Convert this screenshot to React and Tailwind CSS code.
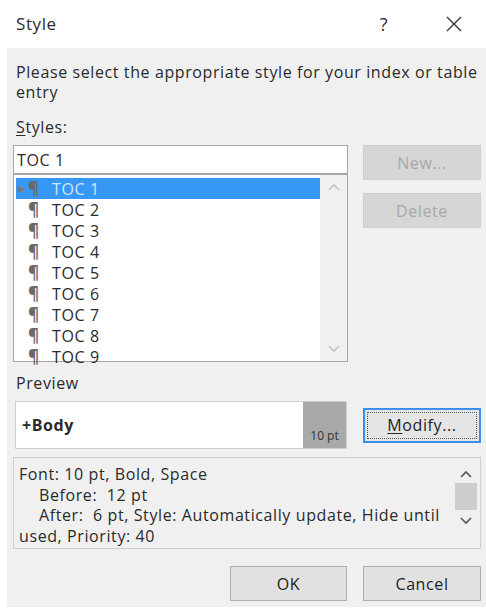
import React from 'react';

const styles = ['TOC 1', 'TOC 2', 'TOC 3', 'TOC 4', 'TOC 5', 'TOC 6', 'TOC 7', 'TOC 8', 'TOC 9'];

function Chevron({ up, className = '' }) {
  return (
    <svg width="12" height="8" viewBox="0 0 12 8" className={className}>
      <polyline
        points={up ? '1,7 6,2 11,7' : '1,1 6,6 11,1'}
        fill="none"
        stroke="currentColor"
        strokeWidth="1.6"
      />
    </svg>
  );
}

function DialogButton({ children, disabled, focused, className = '' }) {
  if (focused) {
    return (
      <div className={`h-[35px] border-2 border-[#3a8fe8] bg-[#e5e5e5] p-[2px] ${className}`}>
        <div className="h-full border border-dotted border-[#555] flex items-center justify-center text-[#222]">
          {children}
        </div>
      </div>
    );
  }
  return (
    <div
      className={`h-[35px] border flex items-center justify-center ${
        disabled ? 'border-[#cfcfcf] bg-[#d6d6d6] text-[#a8a8a8]' : 'border-[#adadad] bg-[#e1e1e1] text-[#222]'
      } ${className}`}
    >
      {children}
    </div>
  );
}

export default function App() {
  return (
    <div className="w-[486px] h-[609px] bg-white text-[16px] tracking-[0.6px] text-[#2a2a2a] font-['Open_Sans','Noto_Sans',sans-serif] overflow-hidden">
      {/* title bar */}
      <div className="h-[48px] flex items-center pl-[16px] pr-[24px]">
        <span className="flex-1 text-[17px]">Style</span>
        <span className="text-[18px] mr-[58px]">?</span>
        <svg width="16" height="16" viewBox="0 0 16 16">
          <path d="M1 1 L15 15 M15 1 L1 15" stroke="#333" strokeWidth="1.4" />
        </svg>
      </div>

      <div className="ml-[7px] h-[559px] bg-[#f0f0f0] pl-[6px] pr-[5px] pt-[14px] flex flex-col">
        <p className="pl-[3px] leading-[20px]">
          Please select the appropriate style for your index or table entry
        </p>

        <div className="pl-[3px] mt-[15px] leading-[20px]">
          <span className="underline underline-offset-2">S</span>tyles:
        </div>

        <div className="flex mt-[8px]">
          <div className="w-[335px] flex flex-col">
            <div className="h-[29px] border border-[#a6a6a6] bg-white flex items-center pl-[3px]">TOC 1</div>
            <div className="h-[188px] border border-[#a6a6a6] bg-white flex">
              <div className="flex-1 pl-[2px] pt-[3px]">
                {styles.map((s, i) => (
                  <div
                    key={s}
                    className={`h-[21px] flex items-center ${i === 0 ? 'bg-[#3797f4] text-[#cfe6ff]' : ''}`}
                  >
                    <span className="w-[12px] text-[10px] text-[#7a7a7a] pl-[2px]">{i === 0 ? '▶' : ''}</span>
                    <span className="w-[24px] font-bold text-[17px] text-[#6a6a6a]">¶</span>
                    <span>{s}</span>
                  </div>
                ))}
              </div>
              <div className="w-[27px] bg-[#f0f0f0] flex flex-col items-center justify-between py-[8px] text-[#c4c4c4]">
                <Chevron up />
                <Chevron />
              </div>
            </div>
          </div>

          <div className="flex-1 flex flex-col items-end">
            <DialogButton disabled className="w-[118px]">New...</DialogButton>
            <DialogButton disabled className="w-[118px] mt-[13px]">Delete</DialogButton>
          </div>
        </div>

        <div className="pl-[3px] mt-[11px] leading-[20px]">Preview</div>

        <div className="flex items-center mt-[8px]">
          <div className="ml-[2px] w-[332px] h-[48px] border border-[#cfcfcf] bg-white flex">
            <div className="flex-1 flex items-center pl-[6px] font-bold">+Body</div>
            <div className="w-[43px] bg-[#a9a9a9] flex items-end justify-center pb-[3px] text-[12px] tracking-normal text-[#333]">10 pt</div>
          </div>
          <div className="flex-1 flex justify-end">
            <DialogButton focused className="w-[118px]">
              <span>
                <span className="underline underline-offset-2">M</span>odify...
              </span>
            </DialogButton>
          </div>
        </div>

        <div className="mt-[8px] h-[92px] border border-[#cfcfcf] bg-[#f0f0f0] flex">
          <div className="flex-1 pl-[5px] pt-[6px] leading-[20.5px]">
            <div>Font: 10 pt, Bold, Space</div>
            <div className="pl-[20px]">Before:&nbsp; 12 pt</div>
            <div className="pl-[20px]">After:&nbsp; 6 pt, Style: Automatically update, Hide until</div>
            <div>used, Priority: 40</div>
          </div>
          <div className="w-[29px] flex flex-col items-center pt-[12px] text-[#555]">
            <Chevron up />
            <div className="w-[22px] h-[27px] bg-[#cdcdcd] mt-[5px]" />
            <div className="mt-[7px]">
              <Chevron />
            </div>
          </div>
        </div>

        <div className="flex justify-end gap-[16px] mt-[17px]">
          <DialogButton className="w-[117px]">OK</DialogButton>
          <DialogButton className="w-[118px]">Cancel</DialogButton>
        </div>
      </div>
    </div>
  );
}
